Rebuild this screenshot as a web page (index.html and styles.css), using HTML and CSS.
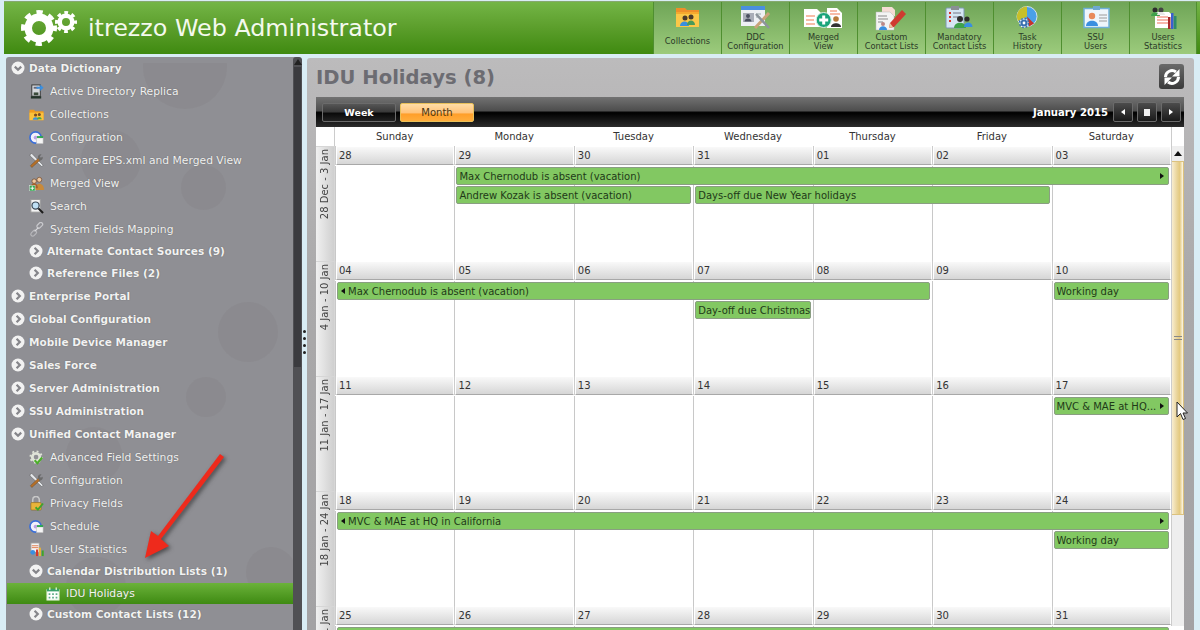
FILE: index.html
```html
<!DOCTYPE html>
<html lang="en">
<head>
<meta charset="utf-8">
<title>itrezzo Web Administrator</title>
<link rel="stylesheet" href="styles.css">
</head>
<body>
<svg class="defs" width="0" height="0">
  <defs>
    <symbol id="i-ad" viewBox="0 0 16 16"><rect x="3" y="1" width="9" height="12" fill="#d5d8dc" stroke="#333"/><rect x="5" y="3" width="5" height="2" fill="#667"/><rect x="5" y="9" width="5" height="3" fill="#3a4a3a"/><rect x="2" y="13" width="11" height="2.500" fill="#24342a"/><path d="M8 3h4V0.500l3.500 3.500L12 7.500V5H8z" fill="#3a8fe0"/></symbol>
    <symbol id="i-folder" viewBox="0 0 16 16"><path d="M0.500 3h5l1 1.500h9V14H0.500z" fill="#ef9a1e"/><rect x="0.500" y="6" width="15" height="8" fill="#fbc23c"/><circle cx="7" cy="8.500" r="1.700" fill="#7a4a20"/><circle cx="11" cy="8" r="1.600" fill="#7a4a20"/><path d="M4 13.500c0-3.500 6-3.500 6 0z" fill="#3a8fe0"/><path d="M8.500 13c0-3 5-3 5 0z" fill="#4aa84a"/></symbol>
    <symbol id="i-config" viewBox="0 0 16 16"><circle cx="7" cy="8" r="6" fill="#f2f0fb" stroke="#3a6fd8" stroke-width="1.800"/><circle cx="7" cy="8" r="2" fill="#b9a0e8"/><rect x="8" y="8.500" width="7" height="6" fill="#f6f6f6" stroke="#bbb" stroke-width=".6"/><rect x="8.500" y="6.500" width="6.500" height="2" fill="#2fa84f"/></symbol>
    <symbol id="i-tools" viewBox="0 0 16 16"><path d="M1.500 1l1.500-.5L15 13l-1.500 1.500L1 3z" fill="#e4e7ea" stroke="#555" stroke-width=".5"/><path d="M3 15.500L1.500 13.500 10 5.500 12 7.500z" fill="#b5702a" stroke="#5d3a12" stroke-width=".4"/><path d="M9.500 5a3 3 0 0 1 4-3.500l-2 2 1 1.500 2-1a3 3 0 0 1-3.500 4z" fill="#6b6b6b"/></symbol>
    <symbol id="i-users" viewBox="0 0 16 16"><circle cx="11" cy="4" r="2.600" fill="#f0c9a0" stroke="#6b3f1d" stroke-width=".7"/><path d="M6.500 15c0-9 9.500-9 9.500 0z" fill="#c98a3a"/><circle cx="5.500" cy="5.500" r="2.400" fill="#f0c9a0" stroke="#6b3f1d" stroke-width=".7"/><path d="M1.500 13c0-7 8-7 8 0z" fill="#a8602a"/><rect x="0.500" y="10" width="6" height="6" fill="#2fa84f" stroke="#eee" stroke-width=".5"/><path d="M3.500 11v4M1.500 13h4" stroke="#fff"/></symbol>
    <symbol id="i-search" viewBox="0 0 16 16"><rect x="2" y="0.500" width="10" height="13.500" fill="#f4f4f4" stroke="#9a9a9a"/><circle cx="7" cy="7" r="3.800" fill="#bfe0f5" stroke="#3c4a58" stroke-width="1.300"/><path d="M10 10l5 5" stroke="#1c1c1c" stroke-width="2.200"/></symbol>
    <symbol id="i-pin" viewBox="0 0 16 16"><rect x="8" y="1.500" width="7" height="4" rx="2" transform="rotate(-45 11.500 3.500)" fill="none" stroke="#c8c8cc" stroke-width="1.300"/><rect x="1.500" y="10" width="7" height="4" rx="2" transform="rotate(-45 5 12)" fill="none" stroke="#b8b8bc" stroke-width="1.300"/><path d="M6 10l4-4" stroke="#d8d8dc" stroke-width="1.300"/></symbol>
    <symbol id="i-gear" viewBox="0 0 16 16"><circle cx="7.500" cy="7.500" r="4" fill="none" stroke="#dfe3d8" stroke-width="3"/><circle cx="7.500" cy="7.500" r="6" fill="none" stroke="#dfe3d8" stroke-width="2" stroke-dasharray="2 2.700"/><path d="M6 11l3 3 5-6" fill="none" stroke="#4caf2a" stroke-width="2.200"/></symbol>
    <symbol id="i-lock" viewBox="0 0 16 16"><path d="M4 7V4a3.500 3.500 0 0 1 7 0v3" fill="none" stroke="#c8c8c8" stroke-width="1.600"/><rect x="2" y="7" width="11" height="8" rx="1" fill="#e8b43a" stroke="#8a6414" stroke-width=".6"/><path d="M7 12l2.500 2.500L15 8" fill="none" stroke="#3fa52a" stroke-width="2"/></symbol>
    <symbol id="i-chart" viewBox="0 0 16 16"><rect x="2" y="1" width="9" height="10" fill="#f4f4f4" stroke="#999"/><path d="M3 4h7M3 6h7" stroke="#e07a4a"/><circle cx="4" cy="11" r="2.600" fill="#3a8fe0"/><rect x="7.500" y="8" width="2.200" height="7" fill="#d8352a"/><rect x="10.500" y="6" width="2.200" height="9" fill="#e8b43a"/><rect x="13.500" y="9" width="2.200" height="6" fill="#3fa52a"/></symbol>
    <symbol id="i-cal" viewBox="0 0 16 16"><rect x="1" y="3" width="14" height="12" fill="#fff" stroke="#cfe8c0"/><rect x="1" y="2" width="14" height="3" fill="#38a06a"/><rect x="3.500" y="0.500" width="1.600" height="3" fill="#d6efc8"/><rect x="10.900" y="0.500" width="1.600" height="3" fill="#d6efc8"/><path d="M3 7h2v2H3zM7 7h2v2H7zM11 7h2v2h-2zM3 11h2v2H3zM7 11h2v2H7zM11 11h2v2h-2z" fill="#5fae88"/></symbol>
    <symbol id="i-down" viewBox="0 0 14 14"><circle cx="7" cy="7" r="6.500" fill="#f2f2f2"/><path d="M3.800 5.600L7 8.800l3.200-3.200" fill="none" stroke="#85858a" stroke-width="2.200"/></symbol>
    <symbol id="i-right" viewBox="0 0 14 14"><circle cx="7" cy="7" r="6.500" fill="#f2f2f2"/><path d="M5.600 3.800L8.800 7l-3.200 3.200" fill="none" stroke="#85858a" stroke-width="2.200"/></symbol>
  </defs>
</svg>

<header class="topbar">
  <svg class="logo" viewBox="0 0 60 42" width="60" height="42">
    <circle cx="18" cy="19" r="10.750" fill="none" stroke="#fff" stroke-width="7.500"/>
    <circle cx="18" cy="19" r="15.500" fill="none" stroke="#fff" stroke-width="5" stroke-dasharray="6.200 5.975" stroke-dashoffset="3"/>
    <circle cx="45" cy="13" r="6.250" fill="none" stroke="#fff" stroke-width="4.500"/>
    <circle cx="45" cy="13" r="9.500" fill="none" stroke="#fff" stroke-width="3" stroke-dasharray="3.800 3.660" stroke-dashoffset="2"/>
  </svg>
  <h1 class="brand">itrezzo Web Administrator</h1>
  <nav class="tools">
    <a class="tool"><svg class="tool-icon" viewBox="0 0 67 31">
      <path d="M22 6h9l2 2h12v17H22z" fill="#ee8f2a"/><path d="M22 11h23v14H22z" fill="#fbc748"/><path d="M22 10h23v2H22z" fill="#f6a92e"/>
      <circle cx="31" cy="16" r="2.500" fill="#4a3a2a"/><circle cx="37" cy="15" r="2.500" fill="#4a3a2a"/><path d="M26 24c0-6 9-6 9 0z" fill="#3a8fe0"/><path d="M33 23c0-6 8-6 8 0z" fill="#4a9a5a"/>
    </svg><span class="tool-label">Collections</span></a>
    <a class="tool"><svg class="tool-icon" viewBox="0 0 67 31">
      <rect x="19" y="4" width="24" height="20" fill="#eef0f4"/><rect x="19" y="4" width="24" height="4" fill="#4a8fe0"/>
      <rect x="21" y="11" width="11" height="9" fill="#a9adb8"/><circle cx="26" cy="14" r="2" fill="#4a4f60"/><path d="M22.500 19.500c0-4 7-4 7 0z" fill="#4a4f60"/><path d="M34 12h5M34 15h4" stroke="#9aa"/>
      <path d="M33 26L47 11" stroke="#c9a37a" stroke-width="3"/><path d="M34 12l13 14" stroke="#8d949c" stroke-width="2.500"/>
    </svg><span class="tool-label">DDC<br>Configuration</span></a>
    <a class="tool"><svg class="tool-icon" viewBox="0 0 67 31">
      <path d="M14 7h13l5 5v13H14z" fill="#fff"/><path d="M16 14h9M16 18h8M16 22h9" stroke="#f07a50" stroke-width="1.200"/>
      <path d="M37 6h10l5 5v15H37z" fill="#fff"/><path d="M40 9h7M40 12h10" stroke="#f07a50" stroke-width="1.200"/><circle cx="46" cy="17" r="2.800" fill="#b87a3a"/><path d="M41 25c0-5 10-5 10 0z" fill="#333"/>
      <circle cx="33.700" cy="18" r="7.500" fill="#19a47a" stroke="#d8efe0"/><path d="M33.700 13.500v9M29.200 18h9" stroke="#fff" stroke-width="3"/>
    </svg><span class="tool-label">Merged<br>View</span></a>
    <a class="tool"><svg class="tool-icon" viewBox="0 0 67 31">
      <path d="M24 5h10l3 3v6H24z" fill="#f5dcd4"/><path d="M18 10h14l4 4v14H18z" fill="#f4f4f4" stroke="#bbb" stroke-width=".5"/>
      <path d="M20 14h9M20 17h10M20 20h5" stroke="#8a8a8a"/><circle cx="25" cy="22" r="2" fill="#b88"/><path d="M21 28c0-5 8-5 8 0z" fill="#3a8fe0"/>
      <path d="M32 21L44 8l4 4-12 13-5 1z" fill="#cf3a30"/><path d="M32 21l3 4-4 1z" fill="#e8c8a0"/>
    </svg><span class="tool-label">Custom<br>Contact Lists</span></a>
    <a class="tool"><svg class="tool-icon" viewBox="0 0 67 31">
      <rect x="20" y="6" width="18" height="20" rx="1" fill="#d5e5f3" stroke="#7e98b0"/><rect x="25" y="4" width="8" height="4" fill="#8a8f94"/>
      <path d="M23 11h2M23 15h2M23 19h2" stroke="#d8352a" stroke-width="2"/><path d="M27 11h8M27 15h5" stroke="#778"/>
      <circle cx="34" cy="17" r="3" fill="#2c2c2c"/><path d="M28 26c0-7 12-7 12 0z" fill="#3fa24a"/><circle cx="41" cy="17" r="2.600" fill="#2c2c2c"/><path d="M38 25c0-6 8.500-6 8.500 0z" fill="#3a8fe0"/>
    </svg><span class="tool-label">Mandatory<br>Contact Lists</span></a>
    <a class="tool"><svg class="tool-icon" viewBox="0 0 67 31">
      <circle cx="33" cy="14.500" r="10" fill="#4aa0e8" stroke="#eef" stroke-width=".8"/><path d="M33 14.500v-10a10 10 0 0 0-9 14.500z" fill="#c8c02a"/><path d="M33 14.500l7 7-5 3z" fill="#c8322a"/>
      <circle cx="30" cy="21" r="4.500" fill="#fff"/><circle cx="30" cy="21" r="2.500" fill="none" stroke="#3a70b0" stroke-width="2.200"/><circle cx="30" cy="21" r="4.500" fill="none" stroke="#3a70b0" stroke-width="1.500" stroke-dasharray="1.800 1.730"/>
    </svg><span class="tool-label">Task<br>History</span></a>
    <a class="tool"><svg class="tool-icon" viewBox="0 0 67 31">
      <rect x="22" y="6.500" width="25" height="19" fill="#eef6fb" stroke="#6fb0d8" stroke-width="1.500"/><rect x="31" y="4" width="7" height="4" fill="#6fa8d0"/>
      <circle cx="30" cy="14" r="3.200" fill="#e88a5a"/><path d="M24 24c0-7 12-7 12 0z" fill="#3a8fe0"/><path d="M37 13h8M37 16h8M37 19h8" stroke="#9a9a9a"/>
    </svg><span class="tool-label">SSU<br>Users</span></a>
    <a class="tool"><svg class="tool-icon" viewBox="0 0 67 31">
      <path d="M25 10h14l3 3v13H25z" fill="#fff"/><path d="M27 15h11M27 18h11M27 21h11" stroke="#f0705a" stroke-width="1.200"/>
      <circle cx="25" cy="8" r="2.500" fill="#2c2c2c"/><path d="M21 14c0-5 9-5 9 0z" fill="#3fa24a"/><circle cx="31" cy="8" r="2.500" fill="#444"/><path d="M27 13c0-4 8-4 8 0z" fill="#e8e8e8"/>
      <rect x="38" y="15" width="2.500" height="12" fill="#a82a2a"/><rect x="41" y="11" width="2.500" height="16" fill="#3a5fd0"/><rect x="44" y="14" width="2.500" height="13" fill="#2f8a6a"/>
    </svg><span class="tool-label">Users<br>Statistics</span></a>
  </nav>
</header>

<div class="app">
  <aside class="sidebar">
    <span class="blot b1"></span><span class="blot b2"></span><span class="blot b3"></span><span class="blot b4"></span><span class="blot b5"></span><span class="blot b6"></span><span class="blot b7"></span><span class="blot b8"></span>
    <div class="tree">
      <div class="group"><svg class="chev"><use href="#i-down"/></svg>Data Dictionary</div>
      <div class="item"><svg class="ico"><use href="#i-ad"/></svg>Active Directory Replica</div>
      <div class="item"><svg class="ico"><use href="#i-folder"/></svg>Collections</div>
      <div class="item"><svg class="ico"><use href="#i-config"/></svg>Configuration</div>
      <div class="item"><svg class="ico"><use href="#i-tools"/></svg>Compare EPS.xml and Merged View</div>
      <div class="item"><svg class="ico"><use href="#i-users"/></svg>Merged View</div>
      <div class="item"><svg class="ico"><use href="#i-search"/></svg>Search</div>
      <div class="item"><svg class="ico"><use href="#i-pin"/></svg>System Fields Mapping</div>
      <div class="subgroup"><svg class="chev"><use href="#i-right"/></svg>Alternate Contact Sources (9)</div>
      <div class="subgroup"><svg class="chev"><use href="#i-right"/></svg>Reference Files (2)</div>
      <div class="group"><svg class="chev"><use href="#i-right"/></svg>Enterprise Portal</div>
      <div class="group"><svg class="chev"><use href="#i-right"/></svg>Global Configuration</div>
      <div class="group"><svg class="chev"><use href="#i-right"/></svg>Mobile Device Manager</div>
      <div class="group"><svg class="chev"><use href="#i-right"/></svg>Sales Force</div>
      <div class="group"><svg class="chev"><use href="#i-right"/></svg>Server Administration</div>
      <div class="group"><svg class="chev"><use href="#i-right"/></svg>SSU Administration</div>
      <div class="group"><svg class="chev"><use href="#i-down"/></svg>Unified Contact Manager</div>
      <div class="item"><svg class="ico"><use href="#i-gear"/></svg>Advanced Field Settings</div>
      <div class="item"><svg class="ico"><use href="#i-tools"/></svg>Configuration</div>
      <div class="item"><svg class="ico"><use href="#i-lock"/></svg>Privacy Fields</div>
      <div class="item"><svg class="ico"><use href="#i-config"/></svg>Schedule</div>
      <div class="item"><svg class="ico"><use href="#i-chart"/></svg>User Statistics</div>
      <div class="subgroup"><svg class="chev"><use href="#i-down"/></svg>Calendar Distribution Lists (1)</div>
      <div class="leaf"><svg class="ico"><use href="#i-cal"/></svg>IDU Holidays</div>
      <div class="subgroup"><svg class="chev"><use href="#i-right"/></svg>Custom Contact Lists (12)</div>
    </div>
    <div class="side-scroll"><span class="side-up"></span><span class="side-thumb"></span></div>
    <svg class="red-arrow" width="90" height="120" viewBox="0 0 90 120">
      <path d="M80 4L84 7 21 89 29 96 5 108 11 81 18 86z" fill="#ee2a1c"/>
    </svg>
  </aside>

  <div class="splitter"><span></span><span></span><span></span><span></span></div>

  <main class="content">
    <div class="title-row">
      <h2 class="title">IDU Holidays (8)</h2>
      <button class="refresh" aria-label="Refresh">
        <svg width="20" height="20" viewBox="0 0 20 20">
          <path d="M3.500 10a6.500 6.500 0 0 1 10.500-5" fill="none" stroke="#fff" stroke-width="3"/><path d="M17.500 2v7.500H10z" fill="#fff"/>
          <path d="M16.500 10a6.500 6.500 0 0 1-10.500 5" fill="none" stroke="#fff" stroke-width="3"/><path d="M2.500 18v-7.500H10z" fill="#fff"/>
        </svg>
      </button>
    </div>

    <section class="calendar">
      <div class="cal-bar">
        <button class="view-btn">Week</button>
        <button class="view-btn active">Month</button>
        <span class="cal-month">January 2015</span>
        <button class="nav-btn"><i class="tri-l"></i></button>
        <button class="nav-btn"><i class="square"></i></button>
        <button class="nav-btn"><i class="tri-r"></i></button>
      </div>

      <div class="day-head">
        <div class="corner"></div>
        <div class="day-names">
          <div>Sunday</div><div>Monday</div><div>Tuesday</div><div>Wednesday</div><div>Thursday</div><div>Friday</div><div>Saturday</div>
        </div>
        <div class="head-fill"></div>
      </div>

      <div class="cal-body">
        <div class="weeks">
          <div class="week">
            <div class="week-label"><span>28 Dec - 3 Jan</span></div>
            <div class="week-grid">
              <div class="date">28</div><div class="date">29</div><div class="date">30</div><div class="date">31</div><div class="date">01</div><div class="date">02</div><div class="date">03</div>
              <div class="line c1"></div><div class="line c2"></div><div class="line c3"></div><div class="line c4"></div><div class="line c5"></div><div class="line c6"></div><div class="line c7"></div>
              <div class="event r1 c2 e7"><span class="ev-text">Max Chernodub is absent (vacation)</span><i class="tri-r"></i></div>
              <div class="event r2 c2 e3"><span class="ev-text">Andrew Kozak is absent (vacation)</span></div>
              <div class="event r2 c4 e6"><span class="ev-text">Days-off due New Year holidays</span></div>
            </div>
          </div>
          <div class="week">
            <div class="week-label"><span>4 Jan - 10 Jan</span></div>
            <div class="week-grid">
              <div class="date">04</div><div class="date">05</div><div class="date">06</div><div class="date">07</div><div class="date">08</div><div class="date">09</div><div class="date">10</div>
              <div class="line c1"></div><div class="line c2"></div><div class="line c3"></div><div class="line c4"></div><div class="line c5"></div><div class="line c6"></div><div class="line c7"></div>
              <div class="event r1 c1 e5"><i class="tri-l"></i><span class="ev-text">Max Chernodub is absent (vacation)</span></div>
              <div class="event r1 c7 e7"><span class="ev-text">Working day</span></div>
              <div class="event r2 c4 e4"><span class="ev-text">Day-off due Christmas</span></div>
            </div>
          </div>
          <div class="week">
            <div class="week-label"><span>11 Jan - 17 Jan</span></div>
            <div class="week-grid">
              <div class="date">11</div><div class="date">12</div><div class="date">13</div><div class="date">14</div><div class="date">15</div><div class="date">16</div><div class="date">17</div>
              <div class="line c1"></div><div class="line c2"></div><div class="line c3"></div><div class="line c4"></div><div class="line c5"></div><div class="line c6"></div><div class="line c7"></div>
              <div class="event r1 c7 e7"><span class="ev-text">MVC &amp; MAE at HQ...</span><i class="tri-r"></i></div>
            </div>
          </div>
          <div class="week">
            <div class="week-label"><span>18 Jan - 24 Jan</span></div>
            <div class="week-grid">
              <div class="date">18</div><div class="date">19</div><div class="date">20</div><div class="date">21</div><div class="date">22</div><div class="date">23</div><div class="date">24</div>
              <div class="line c1"></div><div class="line c2"></div><div class="line c3"></div><div class="line c4"></div><div class="line c5"></div><div class="line c6"></div><div class="line c7"></div>
              <div class="event r1 c1 e7"><i class="tri-l"></i><span class="ev-text">MVC &amp; MAE at HQ in California</span><i class="tri-r"></i></div>
              <div class="event r2 c7 e7"><span class="ev-text">Working day</span></div>
            </div>
          </div>
          <div class="week">
            <div class="week-label"><span>25 Jan - 31 Jan</span></div>
            <div class="week-grid">
              <div class="date">25</div><div class="date">26</div><div class="date">27</div><div class="date">28</div><div class="date">29</div><div class="date">30</div><div class="date">31</div>
              <div class="line c1"></div><div class="line c2"></div><div class="line c3"></div><div class="line c4"></div><div class="line c5"></div><div class="line c6"></div><div class="line c7"></div>
              <div class="event r1 c1 e7"></div>
            </div>
          </div>
        </div>
        <div class="vscroll">
          <div class="vs-up"><i></i></div>
          <div class="vs-thumb"><span class="vs-grip"></span></div>
        </div>
      </div>
    </section>
  </main>
</div>

<svg class="cursor" width="12" height="20" viewBox="0 0 12 20"><path d="M1 1v15l3.500-3.500L7 18.500l2.500-1L7 12h4.500z" fill="#fff" stroke="#222" stroke-width="1"/></svg>
</body>
</html>
```
FILE: styles.css
```css
* { box-sizing: border-box; }

html, body {
  margin: 0;
  height: 630px;
  overflow: hidden;
}

body {
  position: relative;
  background: #d9edf5;
  font-family: "DejaVu Sans", Verdana, sans-serif;
  font-size: 10.75px;
  display: flex;
  flex-direction: column;
}

.defs { position: absolute; }

/* Top bar */
.topbar {
  flex: none;
  height: 53px;
  margin: 1px 0 0 4px;
  display: flex;
  align-items: flex-start;
  background: linear-gradient(#73b546 0%, #5ea02e 45%, #3f8a10 100%);
  border-top: 1px solid #86a86e;
}

.logo { margin: 7px 0 0 17px; flex: none; }

.brand {
  margin: 10px 0 0 7px;
  font-size: 23.8px;
  font-weight: 400;
  line-height: 32px;
  color: #f4f9ee;
  white-space: nowrap;
}

.tools {
  display: flex;
  margin-left: auto;
  margin-right: 3px;
  height: 52px;
}

.tool {
  width: 68px;
  height: 52px;
  display: flex;
  flex-direction: column;
  align-items: center;
  background: linear-gradient(#6fa557, #9ccb7c);
  border-left: 1px solid #4f8f30;
  color: #2b3b28;
  font-size: 8.3px;
  line-height: 8.5px;
  text-align: center;
}

.tool:last-child { border-right: 1px solid #4f8f30; }

.tool-icon {
  flex: none;
  width: 67px;
  height: 31px;
}

.tool-label {
  flex: 1;
  display: flex;
  align-items: center;
  white-space: nowrap;
  padding-bottom: 5px;
}

/* App layout */
.app {
  flex: 1;
  display: flex;
  min-height: 0;
  padding: 3px 6px 0;
}

/* Sidebar */
.sidebar {
  position: relative;
  width: 296px;
  flex: none;
  background: #8f8f94;
  border-radius: 3px 3px 0 0;
  overflow: hidden;
  display: flex;
}

.blot {
  position: absolute;
  border-radius: 50%;
  background: rgba(105, 85, 85, .08);
}
.blot.b1 { left: 137px; top: -32px; width: 84px; height: 84px; clip-path: inset(38px 0 0 0); }
.blot.b2 { left: 75px; top: 73px; width: 60px; height: 60px; }
.blot.b3 { left: 175px; top: 108px; width: 45px; height: 45px; }
.blot.b4 { left: 212px; top: 245px; width: 60px; height: 60px; }
.blot.b5 { left: 180px; top: 320px; width: 40px; height: 40px; }
.blot.b6 { left: 60px; top: 370px; width: 56px; height: 56px; }
.blot.b7 { left: 60px; top: 500px; width: 60px; height: 60px; }
.blot.b8 { left: 240px; top: 490px; width: 50px; height: 50px; }

.tree {
  position: relative;
  flex: 1;
  min-width: 0;
  color: #f2f2f2;
  text-shadow: 0 0 1px rgba(70, 70, 70, .7);
  white-space: nowrap;
}

.group, .item, .subgroup, .leaf {
  display: flex;
  align-items: center;
}

.group {
  height: 23px;
  padding: 0 0 1px 5px;
  font-size: 10.5px;
  font-weight: 700;
}

.item {
  height: 23px;
  padding-left: 23px;
}

.subgroup {
  height: 22px;
  padding: 0 0 2px 23px;
  font-size: 10.6px;
  font-weight: 700;
}

.leaf {
  height: 21px;
  margin-left: 1px;
  padding-left: 39px;
  background: linear-gradient(#6bb23a, #3e8a12);
  color: #f4f9ee;
}

.chev {
  width: 14px;
  height: 14px;
  margin-right: 4px;
  flex: none;
}

.ico {
  width: 15px;
  height: 15px;
  margin-right: 6px;
  flex: none;
}

.leaf .ico { width: 14px; height: 14px; }

.side-scroll {
  width: 9px;
  flex: none;
  background: #505054;
  border-radius: 3px 3px 0 0;
  position: relative;
}

.side-up {
  display: block;
  width: 0;
  margin: 2px auto 0;
  border: 4px solid transparent;
  border-top: 0;
  border-bottom: 6px solid #222;
}

.side-thumb {
  display: block;
  height: 300px;
  margin: 2px 1px 0;
  background: #3b3b3f;
}

.red-arrow {
  position: absolute;
  left: 134px;
  top: 393px;
  filter: drop-shadow(2px 2px 2px rgba(30, 30, 30, .6));
}

/* Splitter */
.splitter {
  width: 5px;
  flex: none;
  display: flex;
  flex-direction: column;
  justify-content: center;
  align-items: center;
  gap: 4px;
  padding-bottom: 3px;
}

.splitter span {
  width: 3px;
  height: 3px;
  border-radius: 50%;
  background: #222;
}

/* Main content */
.content {
  flex: 1;
  min-width: 0;
  margin-top: 1px;
  padding: 0 10px 0 9px;
  background: linear-gradient(#bcbbbc, #aaa9aa 40%, #a3a2a4);
  border-radius: 3px 3px 0 0;
  overflow: hidden;
}

.title-row {
  height: 39px;
  display: flex;
  justify-content: space-between;
  align-items: flex-start;
}

.title {
  margin: 8px 0 0;
  font-size: 19.6px;
  line-height: 24px;
  font-weight: 700;
  color: #6c6c72;
}

.refresh {
  width: 25px;
  height: 25px;
  margin-top: 6px;
  padding: 0;
  display: flex;
  align-items: center;
  justify-content: center;
  border: 0;
  border-radius: 3px;
  background: linear-gradient(#6a6a6a, #3a3a3a);
}

.calendar {
  width: 868px;
  background: #fff;
}

.cal-bar {
  height: 30px;
  display: flex;
  align-items: center;
  gap: 4px;
  padding: 0 3px 0 6px;
  background: linear-gradient(#727272 0%, #4e4e4e 45%, #000 52%, #2c2c2c 100%);
}

.view-btn {
  width: 74px;
  height: 19px;
  padding: 0;
  border: 1px solid #6b6b6b;
  border-radius: 2px;
  background: linear-gradient(#565656 0%, #3a3a3a 45%, #0a0a0a 55%, #222 100%);
  color: #fff;
  font: 700 9.5px "DejaVu Sans", sans-serif;
}

.view-btn.active {
  background: linear-gradient(#ffdca6 0%, #ffc47c 50%, #ff9f2a 60%, #ffad3c 100%);
  border-color: #e8c05a;
  color: #4a3510;
  font-size: 10px;
  font-weight: 400;
}

.cal-month {
  margin-left: auto;
  margin-right: 1px;
  color: #fff;
  font-weight: 700;
  font-size: 10.1px;
}

.nav-btn {
  width: 20px;
  height: 20px;
  padding: 0;
  display: flex;
  align-items: center;
  justify-content: center;
  background: linear-gradient(#4c4c4c, #1a1a1a);
  border: 1px solid #6b6b6b;
  border-radius: 2px;
}

.nav-btn .tri-l { border-right-color: #fff; }
.nav-btn .tri-r { border-left-color: #fff; }

.square {
  width: 6px;
  height: 7px;
  background: #f0f0f0;
}

.tri-l, .tri-r {
  display: block;
  width: 0;
  height: 0;
  flex: none;
  border: 3.500px solid transparent;
}

.tri-l { border-left: 0; border-right: 4px solid #111; }
.tri-r { border-right: 0; border-left: 4px solid #111; }

.day-head {
  height: 19px;
  display: flex;
  color: #333;
  font-size: 10px;
}

.corner {
  width: 19px;
  flex: none;
  border-right: 1px solid #ccc;
}

.day-names {
  flex: 1;
  display: grid;
  grid-template-columns: repeat(7, 1fr);
  text-align: center;
  line-height: 19px;
  border-right: 1px solid #ccc;
}

.head-fill { width: 12px; flex: none; }

.cal-body { display: flex; }

.weeks { flex: 1; min-width: 0; }

.week {
  height: 115px;
  display: flex;
}

.week-label {
  width: 19px;
  flex: none;
  display: flex;
  justify-content: center;
  align-items: flex-start;
  padding-top: 2px;
  background: linear-gradient(90deg, #f0f0f0, #cfcfcf);
  border: solid #d6d6d6;
  border-width: 1px 1px 0 0;
  color: #444;
}

.week-label span {
  writing-mode: vertical-rl;
  transform: rotate(180deg);
  white-space: nowrap;
  font-size: 10px;
  line-height: 16px;
}

.week-grid {
  flex: 1;
  min-width: 0;
  display: grid;
  grid-template-columns: repeat(7, 1fr);
  grid-template-rows: 20px 19px 19px 1fr;
  background: #fff;
  font-size: 10px;
}

.date {
  grid-row: 1;
  height: 19px;
  padding-left: 2px;
  margin: 0 0 0 1px;
  line-height: 17px;
  color: #333;
  background: linear-gradient(#f9f9f9, #d6d6d6);
  border: solid #fff;
  border-width: 1px 1px 0 1px;
  border-bottom: 1px solid #a8a8a8;
  box-shadow: -1px 0 0 #ccc;
}

.line {
  grid-row: 2 / -1;
  border-left: 1px solid #c8c8c8;
}

.c1 { grid-column-start: 1; }
.c2 { grid-column-start: 2; }
.c3 { grid-column-start: 3; }
.c4 { grid-column-start: 4; }
.c5 { grid-column-start: 5; }
.c6 { grid-column-start: 6; }
.c7 { grid-column-start: 7; }
.e3 { grid-column-end: 4; }
.e4 { grid-column-end: 5; }
.e5 { grid-column-end: 6; }
.e6 { grid-column-end: 7; }
.e7 { grid-column-end: 8; }
.r1 { grid-row: 2; }
.r2 { grid-row: 3; }

.event {
  height: 18px;
  margin: 1px 2px 0;
  padding: 0 0 0 2px;
  display: flex;
  align-items: center;
  gap: 2px;
  background: #82c862;
  border: 1px solid #8a9e82;
  border-radius: 2px;
  color: #1f3a18;
  white-space: nowrap;
  overflow: hidden;
}

.ev-text { flex: 1; min-width: 0; overflow: hidden; }

.event .tri-l { margin: 0 1px; }
.event .tri-r { margin-right: 4px; }

.vscroll {
  width: 13px;
  flex: none;
  height: 480px;
  background: #eeeeee;
  border-left: 1px solid #ccc;
}

.vs-up {
  height: 14px;
  display: flex;
  align-items: center;
  justify-content: center;
}

.vs-up i {
  width: 0;
  border: 4px solid transparent;
  border-top: 0;
  border-bottom: 5px solid #111;
}

.vs-thumb {
  height: 354px;
  margin-top: 1px;
  display: flex;
  align-items: center;
  justify-content: center;
  background: linear-gradient(90deg, #f8edd0, #e9d49a 45%, #e4c97f 70%, #fdf8ea);
  border: 1px solid #dcc27e;
  border-width: 1px 1px 1px 0;
}

.vs-grip {
  width: 8px;
  height: 4px;
  border: solid #888;
  border-width: 1px 0;
}

.cursor {
  position: absolute;
  left: 1176px;
  top: 401px;
}
```
